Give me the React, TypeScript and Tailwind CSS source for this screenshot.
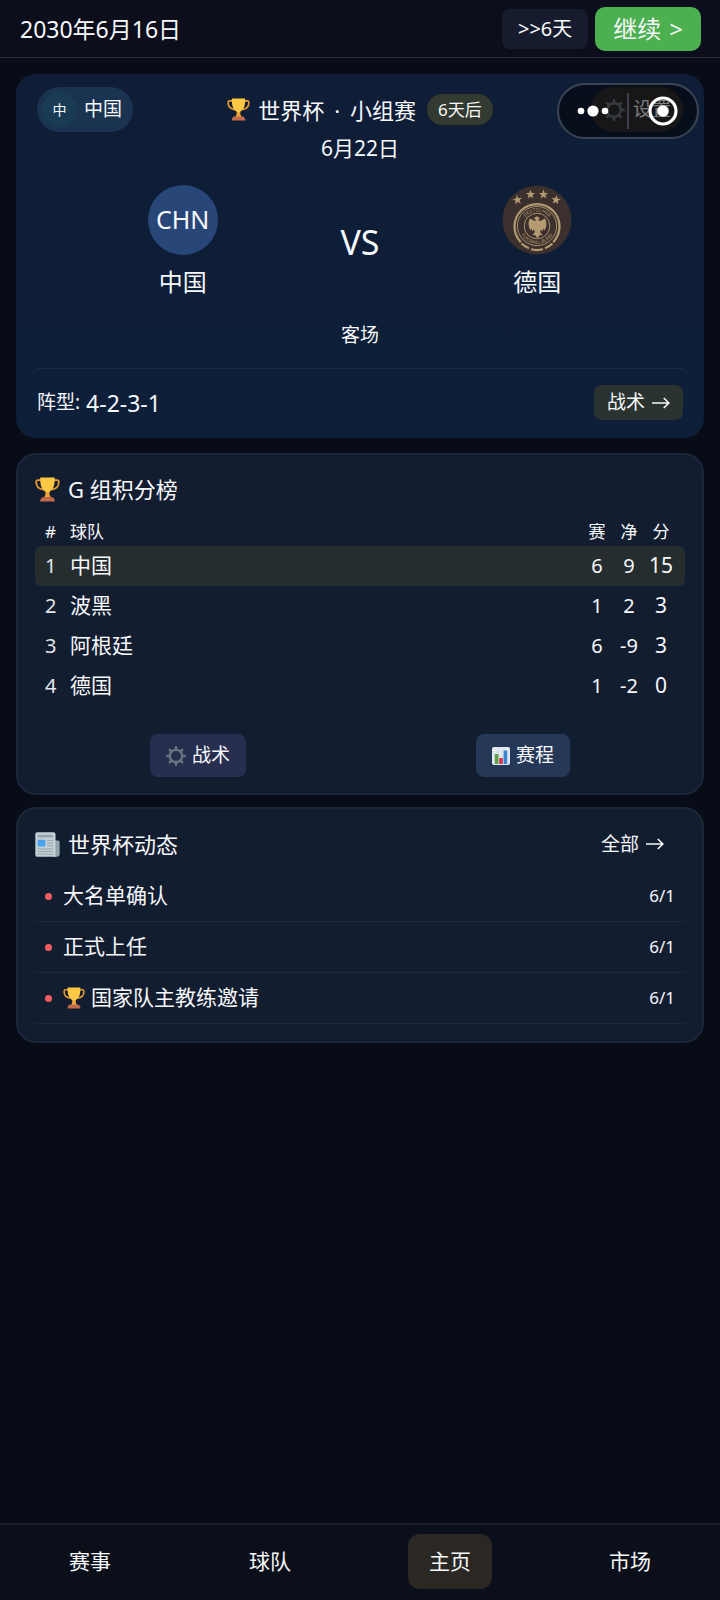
import { useState, type ReactNode } from "react";
import clsx from "clsx";

type Standing = { rank: number; team: string; played: number; diff: number; points: number };
type NewsItem = { id: string; title: string; date: string; trophy?: boolean };

const standings: Standing[] = [
  { rank: 1, team: "中国", played: 6, diff: 9, points: 15 },
  { rank: 2, team: "波黑", played: 1, diff: 2, points: 3 },
  { rank: 3, team: "阿根廷", played: 6, diff: -9, points: 3 },
  { rank: 4, team: "德国", played: 1, diff: -2, points: 0 },
];

const news: NewsItem[] = [
  { id: "squad", title: "大名单确认", date: "6/1" },
  { id: "appointed", title: "正式上任", date: "6/1" },
  { id: "invite", title: "国家队主教练邀请", date: "6/1", trophy: true },
];

const tabs = ["赛事", "球队", "主页", "市场"];

function TrophyIcon({ className }: { className?: string }) {
  return (
    <svg viewBox="0 0 25 25" className={className} aria-hidden="true">
      <path d="M6.500 3.200H3C1.700 3.200 1.200 3.900 1.200 5c0 4 2.300 7 7.300 7.600M18.500 3.200H22c1.300 0 1.800.7 1.800 1.800 0 4-2.300 7-7.300 7.600" fill="none" stroke="#e79a2f" strokeWidth="1.800" />
      <path d="M5.300.5h14.400c.3 6.500-.9 12-5.200 14.200-.6 1.900-.2 3.900 1.500 5.600H9c1.700-1.700 2.100-3.700 1.500-5.600C6.200 12.500 5 7 5.300.5Z" fill="#fdc843" />
      <path d="M10.600 15.200h3.800c-.5 2-.1 3.600 1.300 5.100H9.300c1.400-1.500 1.800-3.100 1.300-5.100Z" fill="#f0a23a" />
      <path d="M7 20.200h11c1.200 1.300 1.700 2.600 1.900 4.300H5.100c.2-1.700.7-3 1.900-4.300Z" fill="#c26a4b" />
    </svg>
  );
}

function GearIcon({ className }: { className?: string }) {
  return (
    <svg viewBox="0 0 20 20" className={className} fill="none" stroke="#6b7680" aria-hidden="true">
      <circle cx="10" cy="10" r="6.200" strokeWidth="2.200" />
      <path
        d="M10 3V1.200M10 17v1.800M3 10H1.200M17 10h1.800M5 5 3.800 3.800M15 15l1.200 1.200M5 15l-1.200 1.200M15 5l1.200-1.200"
        strokeWidth="2.400"
        strokeLinecap="round"
      />
    </svg>
  );
}

function ChartIcon({ className }: { className?: string }) {
  return (
    <svg viewBox="0 0 18 18" className={className} aria-hidden="true">
      <rect width="18" height="18" rx="2" fill="#e3ebf0" />
      <path d="M0 5h18M0 9h18M0 13h18M6 0v18M12 0v18" stroke="#cbd8e0" strokeWidth=".6" />
      <rect x="2.800" y="7" width="3.600" height="10" fill="#5c9e45" />
      <rect x="7.200" y="11" width="3.600" height="6" fill="#d8344f" />
      <rect x="11.600" y="3.500" width="3.600" height="13.500" fill="#3b82cf" />
    </svg>
  );
}

function NewspaperIcon({ className }: { className?: string }) {
  return (
    <svg viewBox="0 0 25 25" className={className} aria-hidden="true">
      <path d="M18 8.500h5c1 0 1.700.7 1.700 1.700V22c0 1.700-1.200 2.800-2.700 2.800h-4Z" fill="#93a4af" />
      <path d="M2.500.2h16c1.200 0 2 .8 2 2V24c0 .5.400.8 1 .8H3c-1.700 0-2.700-1-2.700-2.600V2.200c0-1.200.9-2 2.200-2Z" fill="#c3d0d6" />
      <rect x="2.600" y="2.800" width="15.600" height="2.800" rx=".6" fill="#98a5ac" />
      <rect x="2.600" y="7.800" width="7.800" height="6.600" rx=".8" fill="#4aa5ee" />
      <path d="M12.200 8.600h6M12.200 11.200h6M12.200 13.800h6M2.600 17h15.600M2.600 19.600h15.600M2.600 22.200h15.600" stroke="#98a5ac" strokeWidth="1" />
    </svg>
  );
}

function ArrowIcon({ className }: { className?: string }) {
  return (
    <svg viewBox="0 0 18 12" className={className} fill="none" stroke="currentColor" strokeWidth="1.600" aria-hidden="true">
      <path d="M0 6h16.500M11.800 1l5 5-5 5" />
    </svg>
  );
}

const STAR = "0,-5 1.200,-1.600 4.800,-1.500 1.900,.6 2.900,4 0,2 -2.900,4 -1.900,.6 -4.800,-1.500 -1.200,-1.600";

function GermanyCrest({ className }: { className?: string }) {
  return (
    <svg viewBox="0 0 70 70" className={className} role="img" aria-label="德国">
      <circle cx="35" cy="35" r="34.500" fill="#3b302e" />
      <g fill="#b39a70">
        <polygon points={STAR} transform="translate(15.500 15) rotate(-8)" />
        <polygon points={STAR} transform="translate(28.500 9.500)" />
        <polygon points={STAR} transform="translate(41.500 9.500)" />
        <polygon points={STAR} transform="translate(54 15) rotate(8)" />
      </g>
      <g fill="none" stroke="#b39a70">
        <path d="M18.800 57.200a22.500 22.500 0 1 1 32.400 0" strokeWidth="2.200" />
        <circle cx="35" cy="41" r="19.600" strokeWidth=".9" />
        <circle cx="35" cy="41" r="12.800" strokeWidth=".9" />
        <path d="M19.500 58.500a23 23 0 0 0 7.500 4.800M29 64.300a23.500 23.500 0 0 0 12 0M43 63.300a23 23 0 0 0 7.500-4.800" strokeWidth="2.200" />
      </g>
      <path id="crest-top" d="M20.400 41a14.600 14.600 0 0 1 29.200 0" fill="none" />
      <path id="crest-bottom" d="M17 41a18 18 0 0 0 36 0" fill="none" />
      <g fill="#b39a70" textAnchor="middle" fontSize="4.800">
        <text>
          <textPath href="#crest-top" startOffset="50%">DEUTSCHER</textPath>
        </text>
        <text>
          <textPath href="#crest-bottom" startOffset="50%">FUSSBALL-BUND</textPath>
        </text>
      </g>
      <path
        d="M33 32.500c.8-1.200 2.800-1.300 3.800-.2l1 1.600-1.400.3c.2 1.200 1 1.800 2.200 1.500 1.600-.4 2.600-1.800 4.400-2.300 1.400 2.200 1.700 4.800 1.200 7.500l-1.400 4.600-1.500-2-.8 3-1.500-2-.9 2.400 2.600 3.400-2.900-.4-1 1.800-1.300 1.400-1.300-1.400-1-1.800-2.900.4 2.600-3.400-.9-2.400-1.500 2-.8-3-1.500 2-1.400-4.600c-.5-2.700-.2-5.300 1.200-7.500 1.800.5 2.800 1.900 4.400 2.300 1 .2 1.600-.3 1.600-1.300l-2.200-.6Z"
        fill="#b39a70"
      />
    </svg>
  );
}

function SystemCapsule() {
  return (
    <div className="absolute right-[21px] top-[83px] flex h-14 w-[142px] items-center rounded-full border-2 border-[#3a4453] bg-black/50">
      <button type="button" aria-label="更多" className="flex h-full flex-1 items-center justify-center">
        <svg viewBox="0 0 32 12" className="h-3 w-8" fill="#fff">
          <circle cx="4" cy="6" r="3.300" />
          <circle cx="16" cy="6" r="5.600" />
          <circle cx="28" cy="6" r="3.300" />
        </svg>
      </button>
      <span className="h-9 w-0.5 bg-[#3a4149]" />
      <button type="button" aria-label="关闭" className="flex h-full flex-1 items-center justify-center">
        <svg viewBox="0 0 30 30" className="size-[30px]">
          <circle cx="15" cy="15" r="13" fill="none" stroke="#fff" strokeWidth="3.200" />
          <circle cx="15" cy="15" r="5.800" fill="#fff" />
        </svg>
      </button>
    </div>
  );
}

function Card({ children }: { children: ReactNode }) {
  return <section className="rounded-[20px] border-2 border-[#1c2638] bg-[#131d30] px-[17px]">{children}</section>;
}

function TopBar() {
  return (
    <header className="flex h-[58px] items-center justify-between border-b border-[#272c3e] bg-[#0c0f1b] pl-5 pr-[19px]">
      <time dateTime="2030-06-16" className="text-[23px] leading-8">
        2030年6月16日
      </time>
      <div className="flex items-center gap-[7px]">
        <button type="button" className="h-10 rounded-lg bg-[#161c2d] px-4 text-[20px] leading-6">
          &gt;&gt;6天
        </button>
        <button type="button" className="flex h-11 items-center gap-2 rounded-[10px] bg-[#4caf50] px-[18px] text-2xl">
          <span>继续</span>
          <span>&gt;</span>
        </button>
      </div>
    </header>
  );
}

function MatchCard() {
  return (
    <section className="rounded-[20px] bg-linear-to-b from-[#0f1d36] to-[#0e1f39] px-[21px] pb-[18px] pt-[13px]">
      <div className="grid grid-cols-[1fr_auto_1fr] items-center">
        <button type="button" className="flex h-[45px] items-center gap-[7px] justify-self-start rounded-full bg-[#193350] pl-[5px] pr-[11px] text-[19px]">
          <span className="grid size-[35px] place-items-center rounded-full bg-[#1a3b56] text-sm">中</span>
          <span>中国</span>
        </button>
        <div className="flex items-center">
          <TrophyIcon className="mr-2 size-[23px]" />
          <h1 className="flex gap-2.5 text-[22px] leading-8">
            <span>世界杯</span>
            <span>·</span>
            <span>小组赛</span>
          </h1>
          <span className="ml-[11px] rounded-full bg-[#333a2f] px-[11px] text-[17px] leading-[31px]">6天后</span>
        </div>
        <button type="button" className="flex h-[45px] items-center gap-2 justify-self-end rounded-full bg-[#312e30] px-3 text-[19px]">
          <GearIcon className="size-[22px]" />
          <span>设置</span>
        </button>
      </div>
      <p className="text-center text-[21px] leading-8">6月22日</p>

      <div className="mt-[21px] grid grid-cols-[1fr_auto_1fr] items-center">
        <div className="flex flex-col items-center">
          <span className="grid size-[70px] place-items-center rounded-full bg-[#284678] text-[25px]">CHN</span>
          <span className="mt-[11px] text-2xl leading-8">中国</span>
        </div>
        <span className="px-3 text-[34px] leading-10">VS</span>
        <div className="flex flex-col items-center">
          <GermanyCrest className="size-[70px]" />
          <span className="mt-[11px] text-2xl leading-8">德国</span>
        </div>
      </div>
      <p className="mt-[25px] text-center text-[19px] leading-6">客场</p>

      <div className="mt-[21px] flex items-center justify-between border-t border-[#1e2c42] pt-4">
        <p className="flex items-center gap-1.5 text-[19px]">
          <span>阵型:</span>
          <span className="text-[23px] leading-8">4-2-3-1</span>
        </p>
        <button type="button" className="flex h-[35px] items-center gap-[7px] rounded-lg bg-[#2a332f] px-[13px] text-[19px]">
          战术
          <ArrowIcon className="h-3 w-[18px]" />
        </button>
      </div>
    </section>
  );
}

function StandingsCard() {
  return (
    <Card>
      <h2 className="flex items-center gap-2 pt-[18px] text-[22px] leading-8">
        <TrophyIcon className="size-[25px]" />G 组积分榜
      </h2>
      <table className="mt-[13px] w-full table-fixed border-collapse text-center">
        <thead className="text-[17px]">
          <tr className="h-7">
            <th className="w-[35px] pl-2.5 text-left font-normal">#</th>
            <th className="text-left font-normal">球队</th>
            <th className="w-8 font-normal">赛</th>
            <th className="w-8 font-normal">净</th>
            <th className="w-8 font-normal">分</th>
            <th className="w-2" aria-hidden="true" />
          </tr>
        </thead>
        <tbody className="text-[20px]">
          {standings.map((row) => (
            <tr key={row.rank} className={clsx("h-10", row.rank === 1 && "bg-[#262d2f]")}>
              <td className="rounded-l-md pl-2.5 text-left text-[#e4e7ec]">{row.rank}</td>
              <td className="text-left text-[21px]">{row.team}</td>
              <td>{row.played}</td>
              <td>{row.diff}</td>
              <td className="text-[21px]">{row.points}</td>
              <td className="rounded-r-md" />
            </tr>
          ))}
        </tbody>
      </table>
      <div className="flex justify-around pb-4 pt-7 text-[19px]">
        <button type="button" className="flex h-[43px] items-center gap-1.5 rounded-lg bg-[#272e4f] px-4">
          <GearIcon className="size-5" />
          战术
        </button>
        <button type="button" className="flex h-[43px] items-center gap-1.5 rounded-lg bg-[#253857] px-4">
          <ChartIcon className="size-[18px]" />
          赛程
        </button>
      </div>
    </Card>
  );
}

function NewsCard() {
  return (
    <Card>
      <div className="flex items-center justify-between pr-[21px] pt-[19px]">
        <h2 className="flex items-center gap-2 text-[22px] leading-8">
          <NewspaperIcon className="size-[25px]" />
          世界杯动态
        </h2>
        <a href="#news" className="flex items-center gap-[7px] text-[19px] leading-8">
          全部
          <ArrowIcon className="h-3 w-[18px]" />
        </a>
      </div>
      <ul className="mb-[17px] mt-[11px]">
        {news.map((item) => (
          <li key={item.id} className="flex h-[51px] items-center border-b border-[#1d273a] px-2.5 text-[21px]">
            <span className="mr-[11px] size-[7px] rounded-full bg-[#f25b5f]" />
            {item.trophy && <TrophyIcon className="mr-1.5 size-[22px]" />}
            <span className="flex-1">{item.title}</span>
            <time className="text-[17px]">{item.date}</time>
          </li>
        ))}
      </ul>
    </Card>
  );
}

export default function App() {
  const [activeTab, setActiveTab] = useState("主页");

  return (
    <div className="relative flex min-h-screen flex-col bg-[#080c16] font-['Noto_Sans','Noto_Sans_CJK_SC',sans-serif] text-[#f6f8fb]">
      <TopBar />
      <main className="flex flex-1 flex-col px-4 pt-4">
        <MatchCard />
        <div className="mt-[15px]">
          <StandingsCard />
        </div>
        <div className="mt-3">
          <NewsCard />
        </div>
      </main>
      <nav className="grid h-[77px] grid-cols-4 place-items-center border-t-2 border-[#1a202d] bg-[#0b0f1a] pb-0.5">
        {tabs.map((tab) => (
          <button
            key={tab}
            type="button"
            onClick={() => setActiveTab(tab)}
            className={clsx("h-[55px] rounded-xl px-[21px] text-[21px]", tab === activeTab && "bg-[#2b2823]")}
          >
            {tab}
          </button>
        ))}
      </nav>
      <SystemCapsule />
    </div>
  );
}
